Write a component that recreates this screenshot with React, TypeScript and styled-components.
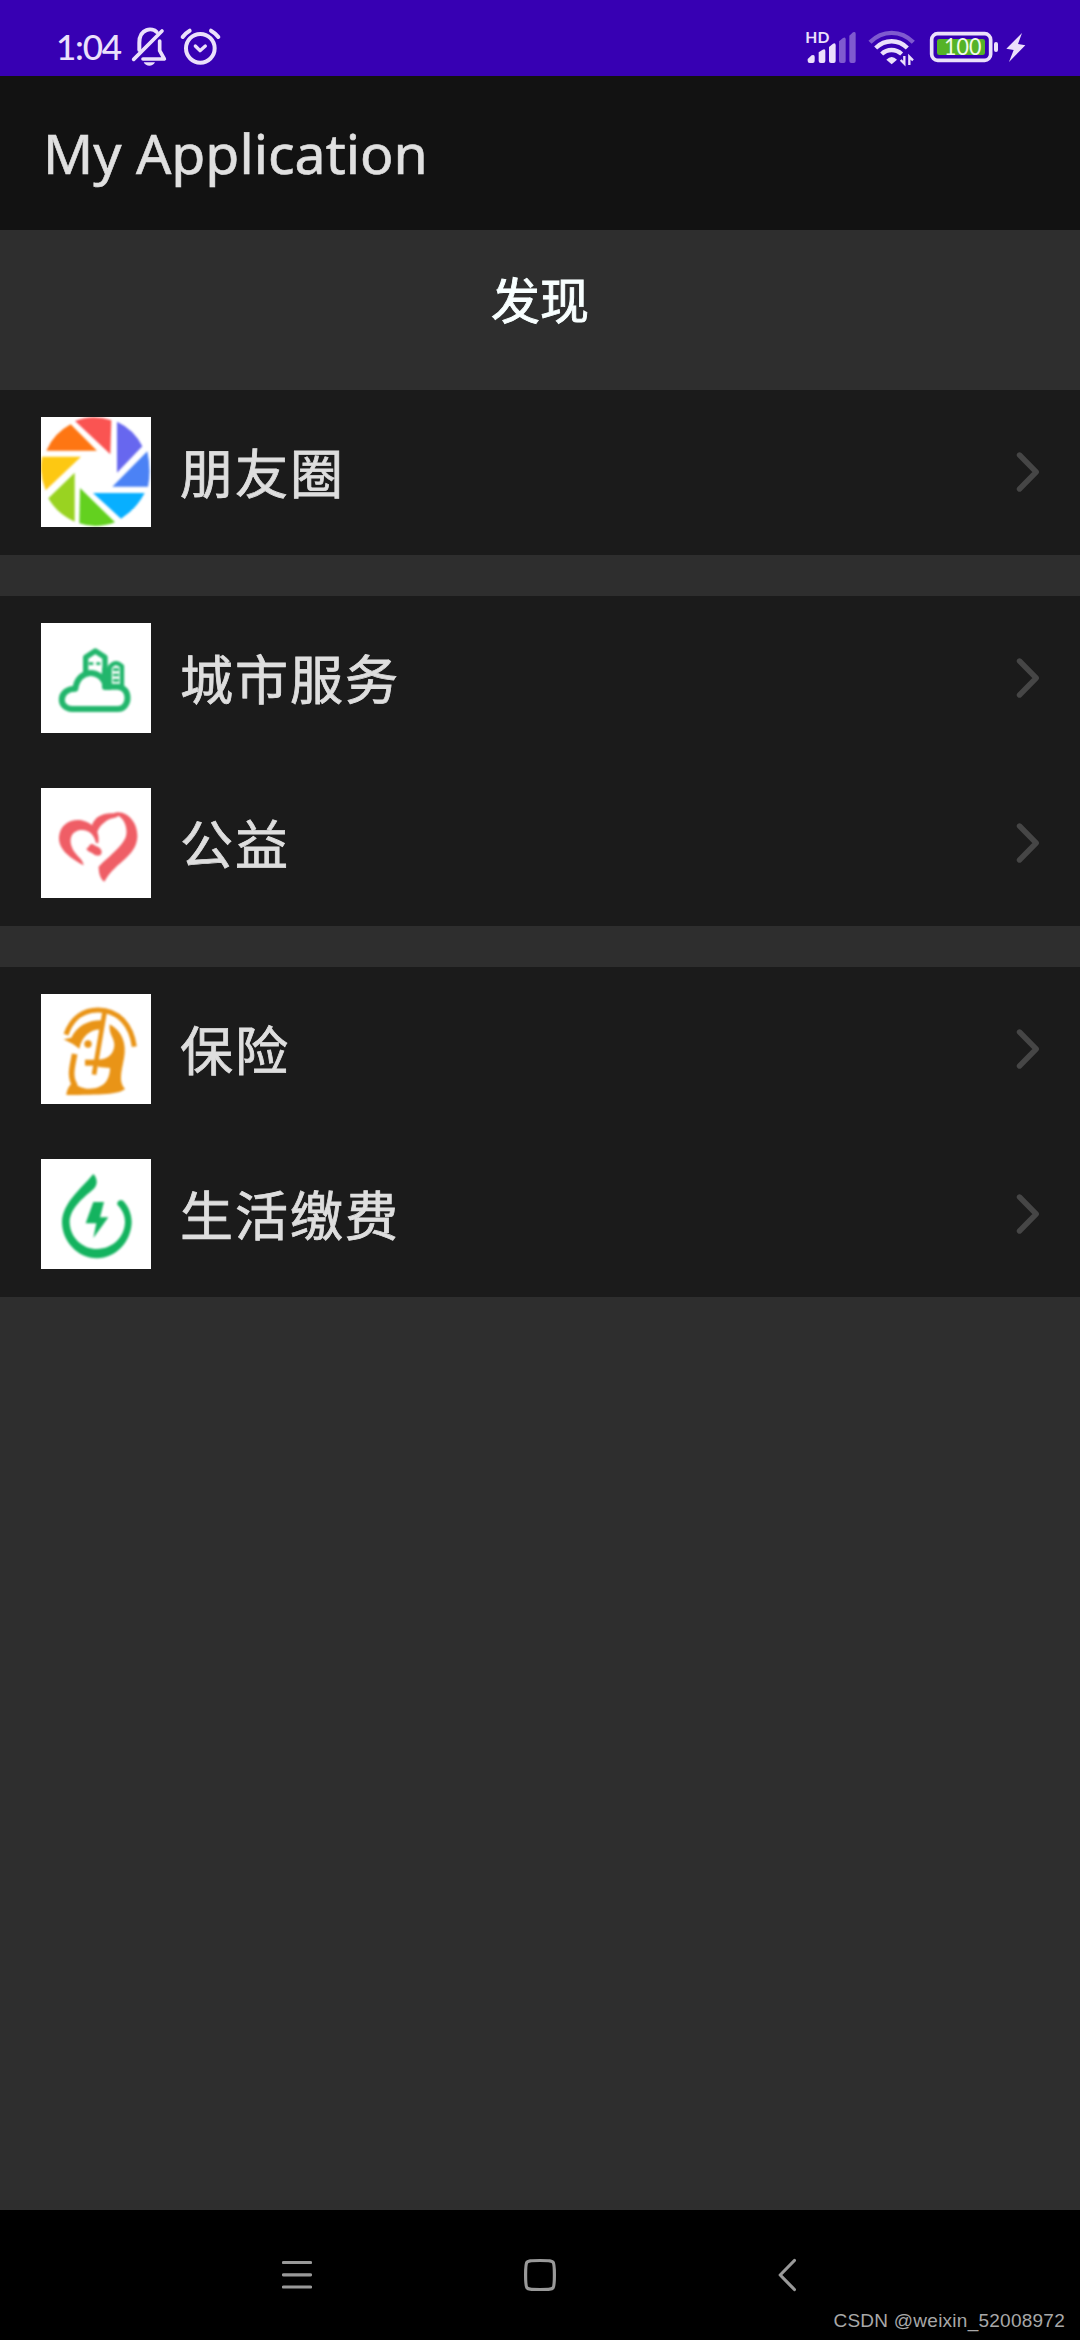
import React from "react";
import styled, { createGlobalStyle } from "styled-components";

const GlobalStyle = createGlobalStyle`
  * { box-sizing: border-box; }
  body { margin: 0; background: #2e2e2e; }
`;

const Screen = styled.div`
  width: 1080px;
  height: 2340px;
  display: flex;
  flex-direction: column;
  overflow: hidden;
  background: #2e2e2e;
  font-family: "Noto Sans", "Noto Sans CJK SC", sans-serif;
`;

const StatusBar = styled.header`
  height: 76px;
  flex: none;
  display: flex;
  justify-content: space-between;
  background: #3700b3;
  padding: 10px 50px 0 54px;
`;

const StatusSide = styled.div<{ $gap: number }>`
  display: flex;
  gap: ${(p) => p.$gap}px;
  height: 66px;
`;

const Clock = styled.span`
  width: 66px;
  padding: 3px 0 0 2px;
  color: #ebe0fb;
  font-family: Lato, sans-serif;
  font-size: 35px;
  font-weight: 500;
  line-height: 66px;
  letter-spacing: -1.2px;
  white-space: nowrap;
`;

const AppBar = styled.div`
  height: 154px;
  flex: none;
  display: flex;
  align-items: center;
  background: #121212;
  padding: 0 43px;
`;

const AppTitle = styled.h1`
  margin: 0;
  color: #e0e0e0;
  font-size: 55.4px;
  font-weight: 400;
  line-height: 70px;
  white-space: nowrap;
  -webkit-text-stroke: 0.6px #e0e0e0;
`;

const PageTitle = styled.h2`
  margin: 0;
  height: 160px;
  flex: none;
  padding-top: 32px;
  color: #f8ffff;
  font-family: "Noto Sans CJK SC", sans-serif;
  font-size: 49px;
  font-weight: 400;
  line-height: 72px;
  text-align: center;
  -webkit-text-stroke: 0.9px #f8ffff;
`;

const Groups = styled.main`
  flex: 1;
  display: flex;
  flex-direction: column;
  gap: 41px;
`;

const Group = styled.section`
  display: flex;
  flex-direction: column;
  background: #1b1b1b;
`;

const Row = styled.div`
  height: 165px;
  display: flex;
  align-items: center;
  padding: 0 40px 1px 41px;
`;

const Picture = styled.div`
  width: 110px;
  height: 110px;
  flex: none;
  overflow: hidden;
  background: #fff;
  svg { display: block; filter: blur(0.9px); }
`;

const Label = styled.span`
  flex: 1;
  padding: 0 0 2px 29px;
  color: #dedede;
  font-family: "Noto Sans CJK SC", sans-serif;
  font-size: 53px;
  line-height: 76px;
  letter-spacing: 2px;
  white-space: nowrap;
  -webkit-text-stroke: 0.8px #dedede;
`;

const NavBar = styled.nav`
  height: 130px;
  flex: none;
  display: grid;
  grid-template-rows: 94px 36px;
  background: #000;
`;

const NavButtons = styled.div`
  display: flex;
  justify-content: space-between;
  padding: 47px 282px 0;
`;

const Watermark = styled.div`
  padding-right: 15px;
  color: #a8a8a8;
  font-family: "Liberation Sans", sans-serif;
  font-size: 19px;
  line-height: 33px;
  letter-spacing: 0.25px;
  text-align: right;
`;

const INK = "#ebe0fb";

const Muted = () => (
  <svg width="38" height="66" viewBox="270 0 114 198" fill="none" stroke={INK} strokeWidth="10" strokeLinecap="round" strokeLinejoin="round">
    <path d="M281 148L366 63" strokeWidth="11" />
    <path d="M298 120V98C298 53 338 53 350 66" strokeWidth="12" />
    <path d="M359 93V122L373 147H309" strokeWidth="11" />
    <path d="M311 157H345C339 171 317 171 311 157Z" fill={INK} stroke="none" />
  </svg>
);

const Alarm = () => (
  <svg width="46" height="66" viewBox="414 0 138 198" fill="none" stroke={INK} strokeLinecap="round" strokeLinejoin="round">
    <circle cx="481" cy="115" r="43" strokeWidth="12" />
    <path d="M466 108L480 122L496 108" strokeWidth="10" />
    <path d="M428 81C434 73 440 67 449 62M513 62C522 67 529 73 535 81" strokeWidth="12" />
  </svg>
);

const Signal = () => (
  <svg width="60" height="66" viewBox="40 0 180 198" fill={INK}>
    <text x="47" y="99" fontFamily="Lato, sans-serif" fontWeight="700" fontSize="47" textLength="72">HD</text>
    <path d="M54 147L66 136Q75 132 75 141V153Q75 159 69 159H60Q54 159 54 153Z" />
    <path d="M87 127L99 119Q107 115 107 123V153Q107 159 101 159H93Q87 159 87 153Z" />
    <path d="M118 111L130 101Q138 98 138 105V153Q138 159 132 159H124Q118 159 118 153Z" />
    <g opacity="0.4">
      <path d="M148 94L160 84Q168 80 168 88V153Q168 159 162 159H154Q148 159 148 153Z" />
      <path d="M179 77L190 67Q198 63 198 71V153Q198 159 192 159H185Q179 159 179 153Z" />
    </g>
  </svg>
);

const Wifi = () => (
  <svg width="64" height="66" viewBox="220 0 192 198" fill="none" stroke={INK} strokeWidth="13">
    <path d="M241 97C278 59 334 59 371 97" opacity="0.4" />
    <path d="M258 114C286 87 326 87 353 114" />
    <path d="M276 132C293 116 318 116 336 132" />
    <path d="M290 149Q306 133 322 149L306 163Z" fill={INK} stroke="none" />
    <path d="M333 150L344 161V138M370 151L359 140V165" strokeWidth="7" />
  </svg>
);

const Battery = () => (
  <svg width="103" height="66" viewBox="411 0 309 198">
    <rect x="425" y="71" width="177" height="80" rx="18" fill="none" stroke={INK} strokeWidth="11" />
    <rect x="441" y="87" width="144" height="48" rx="7" fill="#55b327" />
    <text x="462" y="136" fill="#f1fbeb" fontFamily="Lato, sans-serif" fontWeight="400" fontSize="67" textLength="112" lengthAdjust="spacingAndGlyphs">100</text>
    <rect x="612" y="96" width="12" height="30" rx="6" fill={INK} />
    <path d="M696 69L649 116L671 120L657 156L706 106L684 102Z" fill={INK} />
  </svg>
);

const Moments = () => (
  <svg width="110" height="110" viewBox="0 0 330 330">
    <path fill="#fa5452" d="M102 12Q155-10 211 10L208 112Z" />
    <path fill="#6767ef" d="M228 14Q280 38 304 88L228 167Z" />
    <path fill="#4b82f5" d="M319 103Q331 160 321 209H214Z" />
    <path fill="#08afff" d="M156 228H311Q285 277 240 305Z" />
    <path fill="#63d11f" d="M117 213L222 316Q165 337 115 319Z" />
    <path fill="#99d321" d="M101 167V314Q48 290 22 244Z" />
    <path fill="#fdc812" d="M3 119H120L14 220Q-7 170 3 119Z" />
    <path fill="#fe7613" d="M89 22L168 101H16Q38 49 89 22Z" />
  </svg>
);

const City = () => (
  <svg width="110" height="110" viewBox="0 0 330 330" fill="none" stroke="#22b66c" strokeWidth="16" strokeLinejoin="round">
    <path d="M94 258H230C269 258 270 193 230 191H195C183 134 111 136 103 197C51 197 50 258 94 258Z" strokeWidth="18" />
    <path d="M134 150V103L163 84L192 103V188" />
    <path d="M206 190V133Q223 109 243 130V194" strokeWidth="13" />
    <path d="M143 122H157M166 122H178M216 140H234M216 156H234M216 172H234" strokeWidth="8" />
    <path d="M192 135V192H210" strokeWidth="18" />
  </svg>
);

const Charity = () => (
  <svg width="110" height="110" viewBox="0 0 330 330" fill="#ef5e66">
    <path d="M128 232C87 210 52 185 54 147C57 108 91 92 121 97C157 104 178 130 172 166L165 165C160 138 139 121 113 127C87 134 84 160 94 181C102 201 126 213 128 232Z" />
    <path d="M153 111C162 86 186 74 218 76C230 70 244 74 254 79C278 92 290 120 289 147C287 190 250 214 223 239C207 253 198 267 190 281C177 273 173 252 173 236C207 202 252 170 256 139C259 116 249 93 232 83C225 92 211 88 199 97C184 107 172 119 168 136Z" />
    <path d="M136 182C146 178 143 167 155 168C165 177 181 176 182 192C181 207 165 204 156 197C148 191 140 191 136 182Z" />
  </svg>
);

const Insurance = () => (
  <svg width="110" height="110" viewBox="0 0 330 330" fill="#e99417">
    <g fill="none" stroke="#e99417" strokeWidth="15">
      <path d="M75 122C93 70 130 48 171 48C233 48 271 94 280 158" />
      <path d="M191 53L159 242" strokeWidth="14" />
      <path d="M101 180C95 214 83 248 103 276" strokeWidth="17" />
      <path d="M132 206H207" strokeWidth="18" />
    </g>
    <path d="M68 136L91 131C109 94 144 77 186 79L182 107C150 104 123 126 115 164L97 151Z" />
    <path d="M206 91C243 110 258 150 249 193C240 239 233 264 252 285C232 302 180 302 76 303C77 286 87 272 97 264C123 293 176 290 196 262C204 249 207 235 207 222L172 219V198C205 196 221 174 220 151C218 128 203 122 206 91Z" />
    <circle cx="141" cy="150" r="11" />
  </svg>
);

const Utilities = () => (
  <svg width="110" height="110" viewBox="0 0 330 330" fill="#14b35f">
    <path d="M157 45C169 57 172 77 157 91C129 115 85 149 86 191C88 237 126 270 168 270C216 269 251 234 252 189C252 165 241 149 229 137C227 124 241 119 249 128C264 145 272 168 272 190C270 249 225 297 168 298C109 297 64 248 63 190C64 132 119 91 157 45Z" />
    <path d="M157 129H189L177 175H202L157 237L166 193H134Z" />
  </svg>
);

const Chevron = () => (
  <svg width="24" height="42" viewBox="0 0 24 42" fill="none" stroke="#464646" strokeWidth="5.4" strokeLinecap="round" strokeLinejoin="round">
    <path d="M3.5 4L20.2 21L3.5 38" />
  </svg>
);

const MenuIcon = () => (
  <svg width="30" height="36" viewBox="0 0 30 36" stroke="#999" strokeWidth="3.2" strokeLinecap="round">
    <path d="M1.5 5.5H28.5M1.5 17.8H28.5M1.5 30H28.5" />
  </svg>
);

const HomeIcon = () => (
  <svg width="34" height="36" viewBox="0 0 34 36" fill="none" stroke="#999" strokeWidth="3.2">
    <path d="M17 3.5C27 3.5 28.8 3.9 30 5.2S31.4 9 31.4 18S31.2 29.5 30 30.8S27 32.5 17 32.5S5.2 32.1 4 30.8S2.6 27 2.6 18S2.8 6.5 4 5.2S7 3.5 17 3.5Z" />
  </svg>
);

const BackIcon = () => (
  <svg width="30" height="36" viewBox="-14 0 30 36" fill="none" stroke="#999" strokeWidth="3.2" strokeLinecap="round" strokeLinejoin="round">
    <path d="M12.4 3.5L-1.8 18L12.4 32.5" />
  </svg>
);

const groups = [
  [{ label: "朋友圈", Icon: Moments }],
  [{ label: "城市服务", Icon: City }, { label: "公益", Icon: Charity }],
  [{ label: "保险", Icon: Insurance }, { label: "生活缴费", Icon: Utilities }],
];

export default function App() {
  return (
    <Screen>
      <GlobalStyle />
      <StatusBar>
        <StatusSide $gap={10}>
          <Clock>1:04</Clock>
          <Muted />
          <Alarm />
        </StatusSide>
        <StatusSide $gap={0}>
          <Signal />
          <Wifi />
          <Battery />
        </StatusSide>
      </StatusBar>
      <AppBar>
        <AppTitle>My Application</AppTitle>
      </AppBar>
      <PageTitle>发现</PageTitle>
      <Groups>
        {groups.map((rows) => (
          <Group key={rows[0].label}>
            {rows.map(({ label, Icon }) => (
              <Row key={label}>
                <Picture><Icon /></Picture>
                <Label>{label}</Label>
                <Chevron />
              </Row>
            ))}
          </Group>
        ))}
      </Groups>
      <NavBar>
        <NavButtons>
          <MenuIcon />
          <HomeIcon />
          <BackIcon />
        </NavButtons>
        <Watermark>CSDN @weixin_52008972</Watermark>
      </NavBar>
    </Screen>
  );
}
